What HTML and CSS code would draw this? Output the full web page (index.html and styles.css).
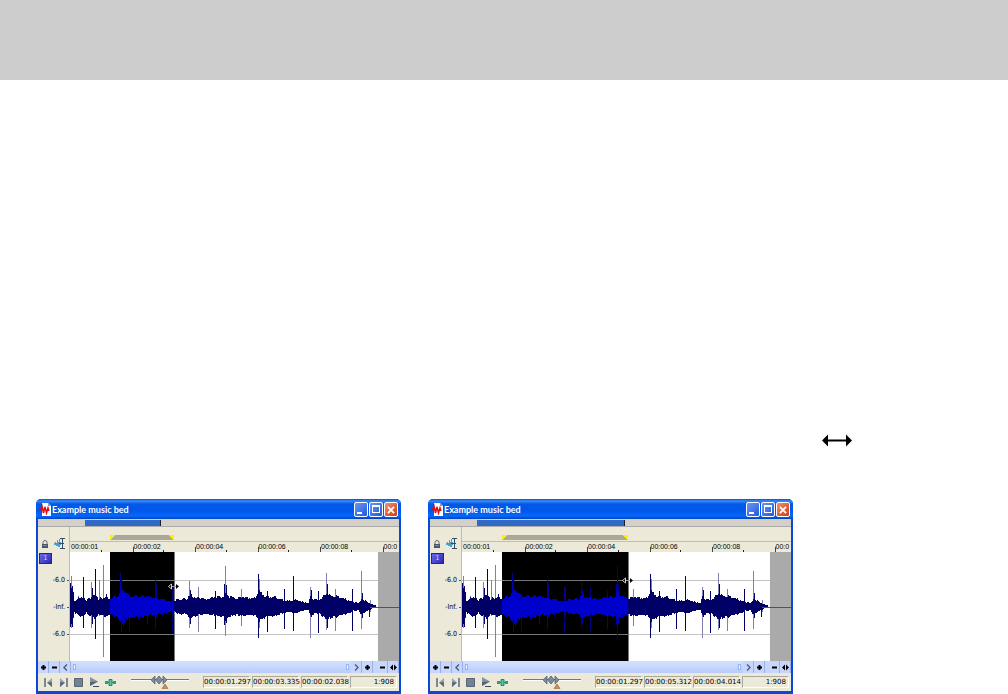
FILE: index.html
```html
<!DOCTYPE html>
<html lang="en">
<head>
    <meta charset="UTF-8">
    <meta name="viewport" content="width=device-width, initial-scale=1.0">
    <title>Example music bed</title>
    <link rel="stylesheet" href="styles.css">
</head>
<body>

<svg class="defs" aria-hidden="true">
    <symbol id="logo" viewBox="0 0 12 13">
        <path d="M3 0h6l3 3v10H3z" fill="#fff"/>
        <path d="M9 0v3h3z" fill="#99a"/>
        <path d="M0 6.500h1.500L3 3l1.500 7L6 4l1.500 6L9 5l1 3" fill="none" stroke="#d81010" stroke-width="1.500"/>
    </symbol>
    <symbol id="lock" viewBox="0 0 8 9">
        <path d="M2 4V2.500a2 2 0 0 1 4 0V4" fill="none" stroke="#667"/>
        <path d="M1 4h6v4H1z" fill="#4c5668"/>
        <path d="M2 5.500h4" stroke="#889"/>
    </symbol>
    <symbol id="snap" viewBox="0 0 12 11">
        <path d="M.5 5v2M1.500 4v3M2.500 5v3M3.500 2v6M4.500 4v5M5.500 1v8M6.500 4v3" fill="none" stroke="#4ca0c8"/>
        <path d="M6 .5h5M8.500 1v9M6 10.500h5M5 5.500h5" fill="none" stroke="#3c4c60" />
    </symbol>
    <symbol id="start" viewBox="0 0 9 9">
        <path d="M1 0v9" stroke="#7c8894" stroke-width="2"/>
        <path d="M8 0v9L3 4.500z" fill="#94a2b0"/>
        <path d="M8 4v5L3 4.500z" fill="#5c6a78"/>
    </symbol>
    <symbol id="end" viewBox="0 0 9 9">
        <path d="M8 0v9" stroke="#7c8894" stroke-width="2"/>
        <path d="M1 0v9l5-4.500z" fill="#94a2b0"/>
        <path d="M1 4v5l5-4.500z" fill="#5c6a78"/>
    </symbol>
    <symbol id="stop" viewBox="0 0 9 9">
        <path d="M.5 .5h8v8h-8z" fill="#708294" stroke="#566676"/>
    </symbol>
    <symbol id="play" viewBox="0 0 10 10">
        <path d="M1 0v9l8-4.500z" fill="#8494a4"/>
        <path d="M1 5v4l8-4.500z" fill="#566676"/>
        <path d="M4 9.500h6" stroke="#445"/>
    </symbol>
    <symbol id="scrub" viewBox="0 0 11 7">
        <path d="M0 2h3v3H0zM8 2h3v3H8z" fill="#2f9c80"/>
        <path d="M3 3.500h5" stroke="#2f9c80"/>
        <path d="M4 .5h3v6H4z" fill="#5fc0a0" stroke="#24866c"/>
    </symbol>
    <symbol id="shuttle" viewBox="0 0 58 14">
        <path d="M0 4.500h58" stroke="#777"/>
        <path d="M0 5.500h58" stroke="#fff"/>
        <path d="M20 5l4-4v8zM24.500 5L28 1l3.500 4L28 9zM36 5l-4-4v8z" fill="#7c8c9c" stroke="#4c5a68" stroke-width=".7"/>
        <path d="M34 9l3 4.500h-6z" fill="#c89058" stroke="#a07040" stroke-width=".7"/>
    </symbol>
    <symbol id="resize" viewBox="0 0 30 12">
        <path d="M5 6h20" stroke="#000" stroke-width="2"/>
        <path d="M0 6l6-6v12zM30 6l-6-6v12z"/>
    </symbol>
    <symbol id="edge" viewBox="0 0 11 7">
        <path d="M3 3.500h5" stroke="#999"/>
        <path d="M.5 3.500L3.500 1v5z" fill="#000" stroke="#fff" stroke-width=".8"/>
        <path d="M11 3.500L8 1v5z" fill="#000"/>
    </symbol>
    <symbol id="plus" viewBox="0 0 7 7">
        <path d="M3.500 1v5M1 3.500h5" stroke="#000" stroke-width="2"/>
    </symbol>
    <symbol id="minus" viewBox="0 0 7 7">
        <path d="M1 3.500h5" stroke="#000" stroke-width="2"/>
    </symbol>
    <symbol id="left" viewBox="0 0 7 7">
        <path d="M5 .5l-3 3 3 3" fill="none" stroke="#4d6185" stroke-width="1.500"/>
    </symbol>
    <symbol id="right" viewBox="0 0 7 7">
        <path d="M2 .5l3 3-3 3" fill="none" stroke="#4d6185" stroke-width="1.500"/>
    </symbol>
    <symbol id="range" viewBox="0 0 7 7">
        <path d="M0 3.500L3 .5v6zM7 3.500l-3-3v6z"/>
    </symbol>
</svg>

<header class="banner"></header>

<main class="page">
    <p class="cursor-line"><svg class="resize"><use href="#resize"/></svg></p>

    <div class="windows">
        <section class="window short">
            <div class="title">
                <svg class="logo"><use href="#logo"/></svg>
                <h2>Example music bed</h2>
                <button class="win-btn" aria-label="Minimize"><i class="min"></i></button>
                <button class="win-btn" aria-label="Maximize"><i class="max"></i></button>
                <button class="win-btn close" aria-label="Close"><svg viewBox="0 0 9 9"><path d="M1 1l7 7M8 1L1 8"/></svg></button>
            </div>
            <div class="body">
                <div class="overview"><div class="overview-range"></div></div>
                <div class="top">
                    <div class="tools">
                        <button aria-label="Lock"><svg class="lock"><use href="#lock"/></svg></button>
                        <button aria-label="Snap"><svg class="snap"><use href="#snap"/></svg></button>
                    </div>
                    <div class="timeline">
                        <div class="loop"><div class="loop-bar"></div></div>
                        <div class="ruler"><span>00:00:01</span><span>00:00:02</span><span>00:00:04</span><span>00:00:06</span><span>00:00:08</span><span>00:0</span></div>
                    </div>
                </div>
                <div class="track">
                    <div class="levels">
                        <b class="channel">1</b>
                        <span>-6.0</span><span>-Inf.</span><span>-6.0</span>
                    </div>
                    <svg class="wave" data-from="40" data-to="104" data-cursor="34"></svg>
                </div>
                <div class="scroll">
                    <button aria-label="Zoom in level"><svg><use href="#plus"/></svg></button>
                    <button aria-label="Zoom out level"><svg><use href="#minus"/></svg></button>
                    <button aria-label="Scroll left"><svg><use href="#left"/></svg></button>
                    <div class="bar"><i></i><i></i></div>
                    <button aria-label="Scroll right"><svg><use href="#right"/></svg></button>
                    <button class="last" aria-label="Zoom in time"><svg><use href="#plus"/></svg></button>
                    <button aria-label="Zoom out time"><svg><use href="#minus"/></svg></button>
                    <button aria-label="Zoom range"><svg><use href="#range"/></svg></button>
                </div>
                <div class="transport">
                    <button aria-label="Go to start"><svg class="ico"><use href="#start"/></svg></button>
                    <button aria-label="Go to end"><svg class="ico"><use href="#end"/></svg></button>
                    <button aria-label="Stop"><svg class="ico"><use href="#stop"/></svg></button>
                    <button aria-label="Play"><svg class="ico play"><use href="#play"/></svg></button>
                    <button aria-label="Scrub"><svg class="ico scrub"><use href="#scrub"/></svg></button>
                    <svg class="shuttle"><use href="#shuttle"/></svg>
                    <div class="times"><span>00:00:01.297</span><span>00:00:03.335</span><span>00:00:02.038</span><span class="ratio">1:908</span></div>
                </div>
            </div>
        </section>

        <section class="window long">
            <div class="title">
                <svg class="logo"><use href="#logo"/></svg>
                <h2>Example music bed</h2>
                <button class="win-btn" aria-label="Minimize"><i class="min"></i></button>
                <button class="win-btn" aria-label="Maximize"><i class="max"></i></button>
                <button class="win-btn close" aria-label="Close"><svg viewBox="0 0 9 9"><path d="M1 1l7 7M8 1L1 8"/></svg></button>
            </div>
            <div class="body">
                <div class="overview"><div class="overview-range"></div></div>
                <div class="top">
                    <div class="tools">
                        <button aria-label="Lock"><svg class="lock"><use href="#lock"/></svg></button>
                        <button aria-label="Snap"><svg class="snap"><use href="#snap"/></svg></button>
                    </div>
                    <div class="timeline">
                        <div class="loop"><div class="loop-bar"></div></div>
                        <div class="ruler"><span>00:00:01</span><span>00:00:02</span><span>00:00:04</span><span>00:00:06</span><span>00:00:08</span><span>00:0</span></div>
                    </div>
                </div>
                <div class="track">
                    <div class="levels">
                        <b class="channel">1</b>
                        <span>-6.0</span><span>-Inf.</span><span>-6.0</span>
                    </div>
                    <svg class="wave" data-from="40" data-to="166" data-cursor="28"></svg>
                </div>
                <div class="scroll">
                    <button aria-label="Zoom in level"><svg><use href="#plus"/></svg></button>
                    <button aria-label="Zoom out level"><svg><use href="#minus"/></svg></button>
                    <button aria-label="Scroll left"><svg><use href="#left"/></svg></button>
                    <div class="bar"><i></i><i></i></div>
                    <button aria-label="Scroll right"><svg><use href="#right"/></svg></button>
                    <button class="last" aria-label="Zoom in time"><svg><use href="#plus"/></svg></button>
                    <button aria-label="Zoom out time"><svg><use href="#minus"/></svg></button>
                    <button aria-label="Zoom range"><svg><use href="#range"/></svg></button>
                </div>
                <div class="transport">
                    <button aria-label="Go to start"><svg class="ico"><use href="#start"/></svg></button>
                    <button aria-label="Go to end"><svg class="ico"><use href="#end"/></svg></button>
                    <button aria-label="Stop"><svg class="ico"><use href="#stop"/></svg></button>
                    <button aria-label="Play"><svg class="ico play"><use href="#play"/></svg></button>
                    <button aria-label="Scrub"><svg class="ico scrub"><use href="#scrub"/></svg></button>
                    <svg class="shuttle"><use href="#shuttle"/></svg>
                    <div class="times"><span>00:00:01.297</span><span>00:00:05.312</span><span>00:00:04.014</span><span class="ratio">1:908</span></div>
                </div>
            </div>
        </section>
    </div>
</main>

<script src="wave.js"></script>
</body>
</html>
```
FILE: styles.css
```css
* {
    box-sizing: border-box;
}

body {
    margin: 0;
    background: #fff;
    color: #000;
    font-family: "DejaVu Sans", sans-serif;
    font-size: 8px;
}

button {
    margin: 0;
    padding: 0;
    border: none;
    background: none;
    color: inherit;
    font: inherit;
}

svg {
    display: block;
    flex: none;
}

.defs {
    width: 0;
    height: 0;
    position: absolute;
}

.banner {
    height: 80px;
    background: #ccc;
}

.page {
    padding: 354px 215px 0 36px;
}

.cursor-line {
    display: flex;
    justify-content: flex-end;
    margin: 0 -59px 52px 0;
}

.resize {
    width: 30px;
    height: 13px;
}

.windows {
    display: flex;
    gap: 27px;
}

.window {
    flex: 1;
    min-width: 0;
    background: #0a48d8;
    border-radius: 5px 5px 0 0;
    padding: 0 2px 3px;
}

.title {
    display: flex;
    align-items: center;
    gap: 1px;
    height: 20px;
    margin: 0 -2px;
    padding: 1px 3px 0;
    border-radius: 5px 5px 0 0;
    background: linear-gradient(#0a4ad0, #3a8cf8 10%, #0058e8 25%, #0058ea 60%, #0468fc 85%, #0042c0);
}

.logo {
    width: 12px;
    height: 13px;
}

.title h2 {
    flex: 1;
    margin: 0;
    color: #fff;
    font: bold 9px/16px Lato, sans-serif;
}

.win-btn {
    display: flex;
    width: 14px;
    height: 15px;
    padding: 2px;
    border: 1px solid #fff;
    border-radius: 2px;
    background: linear-gradient(135deg, #6a98f4, #2458dc);
}

.close {
    align-items: center;
    background: linear-gradient(135deg, #f09070, #d03c10);
}

.close svg {
    width: 8px;
    margin: 0 auto;
    stroke: #fff;
    stroke-width: 2;
}

.min {
    width: 5px;
    height: 2px;
    margin-top: 7px;
    background: #fff;
}

.max {
    width: 8px;
    height: 8px;
    border: 1px solid #fff;
    border-top-width: 2px;
}

.body {
    background: #ece9d8;
}

.overview {
    height: 8px;
    padding: 1px 0;
    background: #d4d0c8;
    border-bottom: 1px solid #aaa;
}

.overview-range {
    height: 6px;
    margin-left: 13%;
    width: 21%;
    background: #316ac5;
    border-right: 1px solid #123;
}

.long .overview-range {
    width: 41%;
}

.top {
    display: flex;
    height: 25px;
}

.tools {
    display: flex;
    align-items: flex-end;
    gap: 5px;
    width: 32px;
    padding: 0 4px 3px 3px;
    border-right: 1px solid #c0bdb0;
}

.lock {
    width: 8px;
    height: 9px;
}

.snap {
    width: 12px;
    height: 11px;
}

.timeline {
    flex: 1;
    min-width: 0;
}

.loop {
    height: 15px;
    padding: 8px 0 0 40px;
    border-bottom: 1px solid #c0bdb0;
}

.loop-bar {
    width: 64px;
    height: 5px;
    background: linear-gradient(135deg, #ffef00 4px, transparent 0), linear-gradient(225deg, #ffef00 4px, #aca899 0);
}

.long .loop-bar {
    width: 126px;
}

.ruler {
    display: flex;
    height: 10px;
}

.ruler span {
    flex: 0 0 19%;
    padding-left: 1px;
    background:
        linear-gradient(#444, #444) 0 100% / 1px 5px no-repeat,
        linear-gradient(#222, #222) 50% 100% / 1px 2px no-repeat;
    font: 7px/9px "Liberation Sans", sans-serif;
}

.ruler span:first-child {
    background-size: 0 0, 1px 2px;
}

.ruler span:last-child {
    flex: 1;
    background-size: 1px 5px, 0 0;
}

.track {
    display: flex;
    height: 109px;
}

.levels {
    display: flex;
    flex-direction: column;
    align-items: flex-end;
    width: 32px;
    border-right: 1px solid #c0bdb0;
    font: 7px/12px "DejaVu Sans Condensed", "DejaVu Sans", sans-serif;
}

.levels span {
    margin-bottom: 15px;
    padding-right: 4px;
    background: linear-gradient(#555, #555) 100% 50% / 2px 1px no-repeat;
}

.channel {
    align-self: flex-start;
    width: 13px;
    height: 11px;
    margin: 1px 0 10px 1px;
    border: 1px solid #2420a0;
    background: linear-gradient(135deg, #6a68e8, #2c28b4);
    color: #dde;
    font-weight: normal;
    line-height: 9px;
    text-align: center;
}

.wave {
    flex: 1;
    min-width: 0;
    height: 109px;
    background: #fff;
}

.scroll {
    display: flex;
    height: 12px;
    background: #c8d6fb;
}

.scroll button {
    width: 11px;
    padding: 0 2px;
    border-right: 1px solid #98b0e8;
}

.scroll button svg {
    width: 7px;
    height: 7px;
}

.scroll .last {
    margin-right: 4px;
}

.bar {
    display: flex;
    flex: 1;
    justify-content: space-between;
    padding: 3px 2px;
    background: linear-gradient(#d4e0ff, #b8ccfa);
}

.bar i {
    width: 3px;
    border: 1px solid #98b4f0;
    background: #eef4ff;
}

.transport {
    display: flex;
    align-items: center;
    gap: 6px;
    height: 18px;
    padding: 0 2px 0 6px;
}

.ico {
    width: 9px;
    height: 9px;
}

.play {
    width: 10px;
    height: 10px;
}

.scrub {
    width: 11px;
    height: 7px;
}

.shuttle {
    width: 58px;
    height: 14px;
    margin-left: 9px;
}

.times {
    display: flex;
    flex: 1;
    justify-content: flex-end;
    gap: 2px;
}

.times span {
    width: 47px;
    border: 1px solid;
    border-color: #aca899 #fff #fff #aca899;
    font: 7px/10px "DejaVu Sans", sans-serif;
    text-align: center;
    white-space: nowrap;
}

.times .ratio {
    padding-right: 2px;
    text-align: right;
}
```
FILE: wave.js
```js
// outline of the clip: [x, half height]
const outline = [[0,17],[3,13],[4,5],[8,8],[12,9],[16,5],[18,9],[22,8],[25,13],[28,7],[33,8],[36,10],[38,7],[41,8],[46,10],[50,13],[53,16],[56,12],[60,10],[70,10],[78,9],[85,8],[90,7],[95,6],[100,5],[104,5],[110,7],[116,7],[119,11],[124,9],[130,8],[136,7],[142,8],[148,9],[152,9],[155,13],[158,10],[165,8],[172,9],[178,8],[185,8],[188,15],[192,11],[197,9],[205,9],[213,6],[220,5],[225,6],[232,4],[238,3],[240,9],[245,6],[250,7],[256,12],[262,10],[265,10],[272,8],[278,6],[283,4],[288,3],[291,7],[295,5],[299,3],[303,1],[306,0]];

// peaks: [x, top, bottom, faint]
const peaks = [[0,31,73,0],[1,24,76,1],[2,34,75,0],[8,44,63,1],[13,25,76,0],[21,30,76,1],[22,36,72,0],[25,17,87,0],[29,28,64,1],[33,13,105,1],[50,21,70,0],[51,28,80,1],[52,38,72,0],[59,41,80,1],[77,46,72,0],[85,28,77,0],[86,32,66,1],[102,35,81,1],[103,35,66,0],[119,29,76,1],[120,38,72,0],[128,35,80,1],[145,39,77,0],[154,32,73,0],[155,14,84,1],[156,33,71,0],[171,37,74,1],[188,22,86,0],[189,27,76,1],[197,39,80,0],[214,37,77,0],[223,24,79,0],[240,35,86,1],[241,38,65,0],[248,39,81,0],[256,21,78,1],[257,32,76,0],[265,37,79,1],[282,37,79,0],[291,19,77,1],[292,41,66,0],[299,51,65,0],[300,48,60,1]];

const mid = 54;

function halfHeight(x) {
    for (let i = 1; i < outline.length; i++) {
        const [x0, h0] = outline[i - 1];
        const [x1, h1] = outline[i];
        if (x <= x1) return h0 + (h1 - h0) * (x - x0) / (x1 - x0);
    }
    return 0;
}

function column(x, top, bottom, color) {
    return `<rect x="${x}" y="${top}" width="1" height="${bottom - top}" fill="${color}"/>`;
}

document.querySelectorAll('.wave').forEach(svg => {
    const from = Number(svg.dataset.from);
    const to = Number(svg.dataset.to);
    const inside = x => x >= from && x < to;
    let out = `<rect x="308" width="100%" height="109" fill="#aaa"/>`;
    out += `<rect x="${from}" width="${to - from}" height="109"/>`;
    out += `<path d="M0 28.500H308M0 82.500H308" stroke="#aaa" stroke-opacity=".7"/>`;
    out += `<path d="M${to + .5} 0V109" stroke="#777"/>`;
    for (const [x, top, bottom, faint] of peaks) {
        const color = inside(x) ? (faint ? '#000080' : '#0000a8') : (faint ? '#7f7fb2' : '#000066');
        out += column(x, top, bottom, color);
    }
    for (let x = 0; x < 306; x++) {
        const h = halfHeight(x);
        const up = Math.max(1, Math.round(h + (Math.sin(x * 0.9) + Math.sin(x * x)) * h / 12));
        const down = Math.max(0, Math.round(h + (Math.cos(x * 1.3) + Math.cos(x * x)) * h / 12));
        out += column(x, mid - up, mid + down + 1, inside(x) ? '#0000cc' : '#000066');
    }
    out += `<rect x="300" y="55" width="100%" height="1" fill="#4848b0"/>`;
    out += `<use href="#edge" x="${to - 6}" y="${svg.dataset.cursor - 3}" width="11" height="7"/>`;
    svg.innerHTML = out;
});
```
